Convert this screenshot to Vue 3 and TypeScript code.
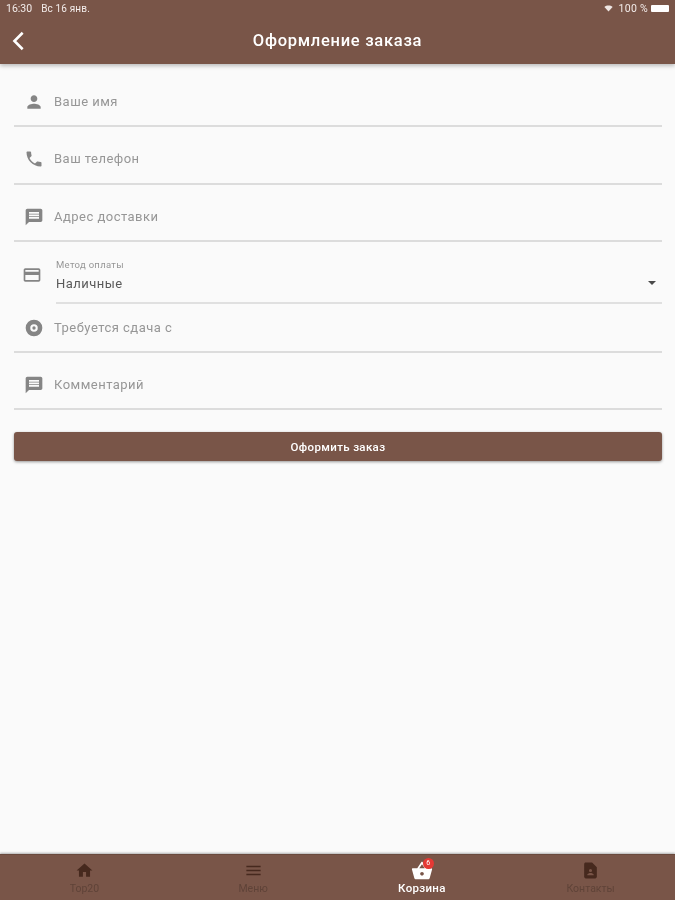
<script setup lang="ts">
interface Field { label: string; path: string; height: number; pad: number }
const person = 'M12 12c2.21 0 4-1.79 4-4s-1.79-4-4-4-4 1.79-4 4 1.79 4 4 4zm0 2c-2.67 0-8 1.34-8 4v2h16v-2c0-2.66-5.33-4-8-4z'
const phone = 'M6.62 10.79c1.44 2.83 3.76 5.14 6.59 6.59l2.2-2.2c.27-.27.67-.36 1.02-.24 1.12.37 2.33.57 3.57.57.55 0 1 .45 1 1V20c0 .55-.45 1-1 1-9.39 0-17-7.61-17-17 0-.55.45-1 1-1h3.5c.55 0 1 .45 1 1 0 1.25.2 2.45.57 3.57.11.35.03.74-.25 1.02l-2.2 2.2z'
const message = 'M20 2H4c-1.1 0-1.99.9-1.99 2L2 22l4-4h14c1.1 0 2-.9 2-2V4c0-1.1-.9-2-2-2zm-2 12H6v-2h12v2zm0-3H6V9h12v2zm0-3H6V6h12v2z'
const coin = 'M12 2a10 10 0 1 0 0 20 10 10 0 0 0 0-20zm0 5.500a4.500 4.500 0 1 1 0 9 4.500 4.500 0 0 1 0-9zm0 2.500a2 2 0 1 0 0 4 2 2 0 0 0 0-4z'
const top: Field[] = [
  { label: 'Ваше имя', path: person, height: 63, pad: 14 },
  { label: 'Ваш телефон', path: phone, height: 58, pad: 15 },
  { label: 'Адрес доставки', path: message, height: 57, pad: 14 },
]
const bottom: Field[] = [
  { label: 'Требуется сдача с', path: coin, height: 49, pad: 14 },
  { label: 'Комментарий', path: message, height: 57, pad: 14 },
]
</script>

<template>
  <div class="page">
    <header class="appbar">
      <div class="status">
        <span class="time">16:30</span>
        <span class="date">Вс 16 янв.</span>
        <span class="spacer"></span>
        <svg class="wifi" viewBox="0 0 24 24"><path d="M12 20 1 8c6-5.300 16-5.300 22 0z" /></svg>
        <span class="pct">100 %</span>
        <span class="battery"></span>
      </div>
      <div class="bar">
        <svg class="back" viewBox="0 0 24 24"><path d="M16 3 7 12l9 9" /></svg>
        <h1>Оформление заказа</h1>
      </div>
    </header>

    <main class="form">
      <div v-for="f in top" :key="f.label" class="field" :style="{ height: f.height + 'px', paddingBottom: f.pad + 'px' }">
        <svg class="ico" viewBox="0 0 24 24"><path :d="f.path" /></svg>
        <span class="label">{{ f.label }}</span>
      </div>

      <div class="select-row">
        <svg class="ico card" viewBox="0 0 24 24"><path d="M20 4H4c-1.110 0-1.990.890-1.990 2L2 18c0 1.110.890 2 2 2h16c1.110 0 2-.890 2-2V6c0-1.110-.890-2-2-2zm0 14H4v-6h16v6zm0-10H4V6h16v2z" /></svg>
        <div class="select">
          <span class="cap">Метод оплаты</span>
          <span class="value">Наличные</span>
          <span class="caret"></span>
        </div>
      </div>

      <div v-for="f in bottom" :key="f.label" class="field" :style="{ height: f.height + 'px', paddingBottom: f.pad + 'px' }">
        <svg class="ico" viewBox="0 0 24 24"><path :d="f.path" fill-rule="evenodd" /></svg>
        <span class="label">{{ f.label }}</span>
      </div>

      <button class="submit" type="button">Оформить заказ</button>
    </main>

    <nav class="tabs">
      <div class="tab">
        <svg viewBox="0 0 24 24"><path d="M10 20v-6h4v6h5v-8h3L12 3 2 12h3v8z" /></svg>
        <span>Top20</span>
      </div>
      <div class="tab">
        <svg viewBox="0 0 24 24"><path d="M3 18h18v-2H3v2zm0-5h18v-2H3v2zm0-7v2h18V6H3z" /></svg>
        <span>Меню</span>
      </div>
      <div class="tab active">
        <div class="basket">
          <svg viewBox="0 0 24 24"><path fill-rule="evenodd" d="M17.210 9l-4.380-6.560c-.190-.280-.510-.420-.830-.420-.320 0-.640.140-.830.430L6.790 9H2c-.550 0-1 .450-1 1 0 .090.010.180.040.270l2.540 9.270c.230.840 1 1.460 1.920 1.460h13c.920 0 1.690-.620 1.930-1.460l2.540-9.270L23 10c0-.550-.450-1-1-1h-4.790zM9 9l3-4.400L15 9H9zm3 8c-1.100 0-2-.900-2-2s.900-2 2-2 2 .900 2 2-.900 2-2 2z" /></svg>
          <i class="badge">6</i>
        </div>
        <span>Корзина</span>
      </div>
      <div class="tab">
        <svg viewBox="0 0 24 24"><path fill-rule="evenodd" d="M14 2H6c-1.100 0-2 .900-2 2v16c0 1.100.900 2 2 2h12c1.100 0 2-.900 2-2V8l-6-6zm-2 8a2 2 0 1 1 0 4 2 2 0 0 1 0-4zm4 8H8v-1c0-1.330 2.670-2 4-2s4 .670 4 2v1z" /></svg>
        <span>Контакты</span>
      </div>
    </nav>
  </div>
</template>

<style>
html, body { margin: 0; background: #fafafa; }
</style>

<style scoped>
.page {
  width: 675px;
  height: 900px;
  display: flex;
  flex-direction: column;
  background: #fafafa;
  font-family: Roboto, "Noto Sans", sans-serif;
  overflow: hidden;
  filter: blur(0.5px);
}
.appbar {
  height: 64px;
  flex: none;
  background: #795548;
  color: #fff;
  box-shadow: 0 2px 4px rgba(0, 0, 0, 0.25);
  position: relative;
  z-index: 1;
}
.status {
  height: 16px;
  display: flex;
  align-items: center;
  padding: 0 6px 0 6px;
  font-size: 10.500px;
  color: #f3ecea;
}
.date { margin-left: 9px; font-size: 10px; letter-spacing: 0.150px; }
.spacer { flex: 1; }
.wifi { width: 9px; height: 9px; fill: #eee6e3; margin-right: 6px; }
.pct { font-size: 10.500px; letter-spacing: 0.300px; }
.battery {
  width: 18px;
  height: 7px;
  margin-left: 3px;
  background: #fff;
  border-radius: 1px;
}
.bar {
  height: 47px;
  padding-top: 1px;
  position: relative;
  display: flex;
  align-items: center;
  justify-content: center;
}
.bar h1 {
  margin: 0;
  font-size: 16.500px;
  font-weight: 500;
  letter-spacing: 0.720px;
}
.back {
  position: absolute;
  left: 8px;
  top: 13px;
  width: 22px;
  height: 24px;
  fill: none;
  stroke: #fff;
  stroke-width: 2.800px;
}
.form {
  flex: 1;
  padding: 0 13px 0 14px;
  display: flex;
  flex-direction: column;
}
.field {
  box-sizing: border-box;
  display: flex;
  align-items: flex-end;
  border-bottom: 2px solid #dcdcdc;
  flex: none;
}
.ico {
  width: 20px;
  height: 20px;
  fill: #858585;
  margin-left: 10px;
  flex: none;
  transform: translateY(1px);
}
.label {
  margin-left: 10px;
  font-size: 13px;
  line-height: 20px;
  letter-spacing: 0.480px;
  color: #969696;
  transform: translateY(1px);
}
.select-row {
  height: 62px;
  flex: none;
  display: flex;
  align-items: center;
}
.card { margin-left: 8px; margin-right: 14px; margin-top: 2px; }
.select {
  flex: 1;
  height: 62px;
  box-sizing: border-box;
  border-bottom: 2px solid #e0e0e0;
  position: relative;
  display: flex;
  flex-direction: column;
  padding-top: 17px;
}
.cap {
  font-size: 9.500px;
  letter-spacing: 0.300px;
  color: #969696;
  line-height: 12px;
}
.value {
  font-size: 13px;
  letter-spacing: 0.450px;
  color: #5a5a5a;
  line-height: 18px;
  margin-top: 4px;
}
.caret {
  position: absolute;
  right: 6px;
  top: 39px;
  border-left: 4px solid transparent;
  border-right: 4px solid transparent;
  border-top: 4px solid #4a4a4a;
}
.submit {
  margin-top: 22px;
  height: 29px;
  border: 0;
  border-radius: 3px;
  background: #795548;
  color: #fff;
  font: 500 11.500px Roboto, sans-serif;
  letter-spacing: 0.350px;
  box-shadow: 0 1px 3px rgba(0, 0, 0, 0.4);
  flex: none;
}
.tabs {
  height: 46px;
  flex: none;
  background: #795548;
  display: grid;
  grid-template-columns: repeat(4, 1fr);
  box-shadow: 0 -1px 2px rgba(0, 0, 0, 0.3);
  border-top: 1px solid #6a4a3e;
  box-sizing: border-box;
}
.tab {
  display: flex;
  flex-direction: column;
  align-items: center;
  padding-top: 6px;
  color: #5f4338;
  font-size: 10.500px;
  line-height: 13px;
}
.tab svg { width: 19px; height: 19px; fill: #46291e; display: block; }
.tab > span { margin-top: 2px; }
.tab.active { color: #fff; font-size: 11.500px; font-weight: 500; letter-spacing: 0.300px; }
.tab.active svg { fill: #fff; width: 22px; height: 22px; margin-top: -1px; }
.basket { position: relative; height: 19px; }
.badge {
  position: absolute;
  top: -3px;
  right: -1px;
  width: 11px;
  height: 11px;
  border-radius: 50%;
  background: #e53935;
  color: #fff;
  font: normal 7px/11px Roboto, sans-serif;
  text-align: center;
}
</style>
